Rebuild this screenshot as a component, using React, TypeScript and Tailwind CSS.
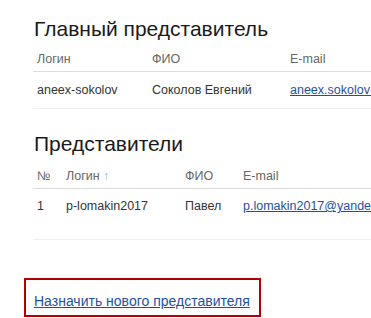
import React from 'react';

const th = 'text-left font-normal text-[#666] align-bottom pt-[9px] pb-[4px] pl-[4px] border-b border-[#dcdcdc]';
const td = 'align-top pl-[4px] pt-[9px] text-[#333] border-b border-[#efefef]';

function EmailLink({ children }: { children: React.ReactNode }) {
  return (
    <a href="#" className="text-[#1f4fa3] underline whitespace-nowrap">
      {children}
    </a>
  );
}

export default function App() {
  return (
    <div
      className="w-[371px] h-[318px] overflow-hidden bg-white text-[12.5px] leading-[16px]"
      style={{ fontFamily: '"Liberation Sans", Arial, sans-serif' }}
    >
      <div className="pl-[33px] pt-[16px]">
        <h2 className="pl-px text-[21px] leading-[26px] text-[#1a1a1a]">Главный представитель</h2>
        <table className="w-[460px] border-collapse">
          <thead>
            <tr>
              <th className={`${th} w-[115px]`}>Логин</th>
              <th className={`${th} w-[138px]`}>ФИО</th>
              <th className={th}>E-mail</th>
            </tr>
          </thead>
          <tbody>
            <tr>
              <td className={`${td} pt-[10px] pb-[10px]`}>aneex-sokolov</td>
              <td className={`${td} pt-[10px] pb-[10px] whitespace-nowrap`}>Соколов Евгений</td>
              <td className={`${td} pt-[10px] pb-[10px]`}>
                <EmailLink>aneex.sokolov@yandex.ru</EmailLink>
              </td>
            </tr>
          </tbody>
        </table>

        <h2 className="mt-[22px] pl-px text-[21px] leading-[26px] text-[#1a1a1a]">Представители</h2>
        <table className="w-[460px] border-collapse">
          <thead>
            <tr>
              <th className={`${th} pt-[11px] pb-[3px] w-[29px]`}>№</th>
              <th className={`${th} pt-[11px] pb-[3px] w-[119px]`}>
                Логин <span className="text-[#7fc0a0] text-[12px]">↑</span>
              </th>
              <th className={`${th} pt-[11px] pb-[3px] w-[58px]`}>ФИО</th>
              <th className={`${th} pt-[11px] pb-[3px]`}>E-mail</th>
            </tr>
          </thead>
          <tbody>
            <tr>
              <td className={`${td} pt-[8px] pb-[25px]`}>1</td>
              <td className={`${td} pt-[8px] pb-[25px]`}>p-lomakin2017</td>
              <td className={`${td} pt-[8px] pb-[25px]`}>Павел</td>
              <td className={`${td} pt-[8px] pb-[25px]`}>
                <EmailLink>p.lomakin2017@yandex.ru</EmailLink>
              </td>
            </tr>
          </tbody>
        </table>
      </div>

      <div className="ml-[24px] mt-[38px] w-[237px] border-2 border-[#b30000] pl-[8px] pt-[13px] pb-[5px]">
        <a href="#" className="text-[14px] text-[#1f4fa3] underline whitespace-nowrap">
          Назначить нового представителя
        </a>
      </div>
    </div>
  );
}
